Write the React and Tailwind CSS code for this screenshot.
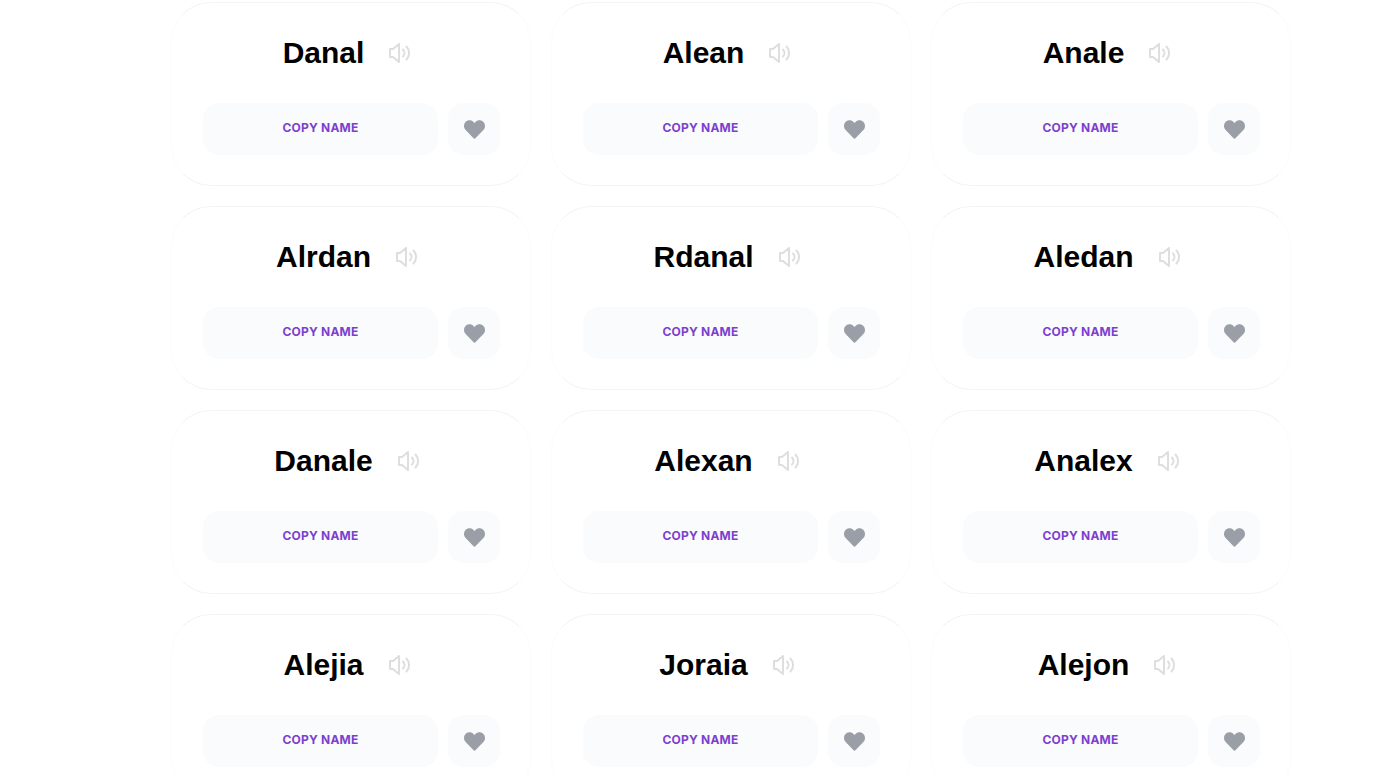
import React from "react";
import { FaHeart } from "react-icons/fa";

const NAMES = [
  "Danal", "Alean", "Anale",
  "Alrdan", "Rdanal", "Aledan",
  "Danale", "Alexan", "Analex",
  "Alejia", "Joraia", "Alejon",
];

const SpeakerIcon = () => (
  <svg width="22" height="22" viewBox="0 0 22 22" fill="none" stroke="currentColor" strokeWidth="2" strokeLinejoin="round" strokeLinecap="round">
    <path d="M10 2 L4 7 H1 V15 H4 L10 20 Z" />
    <path d="M14 7.5 a5 5 0 0 1 0 7" />
    <path d="M17.5 4.5 a9.5 9.5 0 0 1 0 13" />
  </svg>
);

const NameCard = ({ name }) => (
  <div className="h-[184px] rounded-[40px] border border-x-[#fbfbfb] border-y-[#f4f4f5] bg-white pt-[30px] pr-[30px] pl-[31px]">
    <div className="flex h-[40px] justify-center pr-[56px]">
      <h3 className="relative font-['Liberation_Sans',Arial,sans-serif] text-[30px] leading-[40px] font-bold text-black">
        {name}
        <span className="absolute top-[9px] left-full ml-[25px] text-[#dedee0]">
          <SpeakerIcon />
        </span>
      </h3>
    </div>
    <div className="mt-[30px] flex gap-[10px]">
      <button className="h-[52px] w-[235px] rounded-2xl bg-[#f9fbfc] pb-[2px] font-['Inter',sans-serif] text-xs font-bold tracking-[0.2px] text-[#7e3fcf]">
        COPY NAME
      </button>
      <button className="flex h-[52px] w-[52px] items-center justify-center rounded-2xl bg-[#f9fbfc] text-[#9a9ea6]">
        <FaHeart size={21} />
      </button>
    </div>
  </div>
);

export default function App() {
  return (
    <div className="h-[775px] overflow-hidden bg-white pt-[2px] pl-[171px]">
      <div className="grid w-[1120px] grid-cols-3 gap-[20px]">
        {NAMES.map((name) => (
          <NameCard key={name} name={name} />
        ))}
      </div>
    </div>
  );
}
